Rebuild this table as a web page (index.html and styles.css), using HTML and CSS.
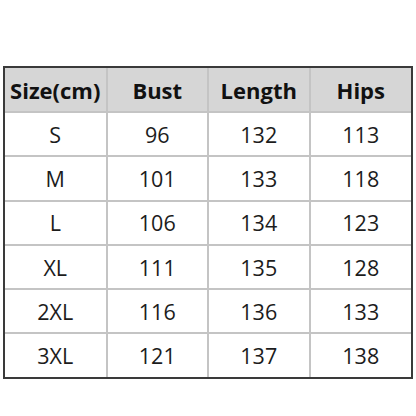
FILE: index.html
```html
<!DOCTYPE html>
<html>
<head>
<meta charset="utf-8">
<link rel="stylesheet" href="styles.css">
</head>
<body>
<div class="frame">
<table class="size-table">
  <thead>
    <tr><th>Size(cm)</th><th>Bust</th><th>Length</th><th>Hips</th></tr>
  </thead>
  <tbody>
    <tr><td>S</td><td>96</td><td>132</td><td>113</td></tr>
    <tr><td>M</td><td>101</td><td>133</td><td>118</td></tr>
    <tr><td>L</td><td>106</td><td>134</td><td>123</td></tr>
    <tr><td>XL</td><td>111</td><td>135</td><td>128</td></tr>
    <tr><td>2XL</td><td>116</td><td>136</td><td>133</td></tr>
    <tr><td>3XL</td><td>121</td><td>137</td><td>138</td></tr>
  </tbody>
</table>
</div>
</body>
</html>
```
FILE: styles.css
```css
html, body {
  margin: 0;
  padding: 0;
  background: #ffffff;
}
body {
  padding: 66px 3px 0 3px;
  font-family: "Open Sans", "Liberation Sans", sans-serif;
  color: #1c1c1c;
}
.frame {
  width: 406px;
  border: 2px solid #3a3a3a;
}
.size-table {
  width: 100%;
  border-collapse: collapse;
  border-style: hidden;
  table-layout: fixed;
}
.size-table th,
.size-table td {
  border: 2px solid #c4c4c4;
  text-align: center;
  padding: 0;
}
.size-table th {
  height: 43px;
  background: #d6d6d6;
  font-weight: 700;
  font-size: 22px;
  color: #111111;
}
.size-table td {
  height: 42.3px;
  font-size: 21.5px;
  font-weight: 400;
}
```
